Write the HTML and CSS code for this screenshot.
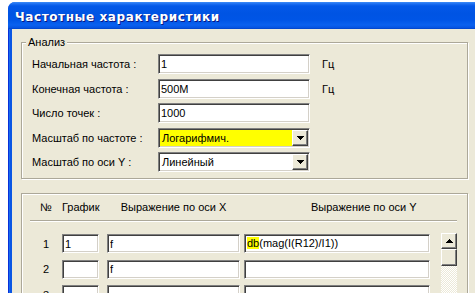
FILE: index.html
```html
<!DOCTYPE html>
<html lang="ru">
<head>
    <meta charset="UTF-8">
    <meta name="viewport" content="width=device-width, initial-scale=1.0">
    <title>Частотные характеристики</title>
    <link rel="stylesheet" href="styles.css">
</head>
<body>

    <div class="window">
        <div class="titlebar">Частотные характеристики</div>
        <div class="client">

            <fieldset class="group">
                <legend>Анализ</legend>
                <div class="form-grid">
                    <label>Начальная частота :</label>
                    <input class="edit" type="text" value="1">
                    <span class="unit">Гц</span>

                    <label>Конечная частота :</label>
                    <input class="edit" type="text" value="500M">
                    <span class="unit">Гц</span>

                    <label>Число точек :</label>
                    <input class="edit" type="text" value="1000">
                    <span></span>

                    <label>Масштаб по частоте :</label>
                    <div class="combo combo-active">
                        <span class="combo-text">Логарифмич.</span>
                        <span class="drop-btn">
                            <svg width="7" height="4" viewBox="0 0 7 4"><polygon points="0,0 7,0 3.5,4" fill="#000"/></svg>
                        </span>
                    </div>
                    <span></span>

                    <label>Масштаб по оси Y :</label>
                    <div class="combo">
                        <span class="combo-text">Линейный</span>
                        <span class="drop-btn">
                            <svg width="7" height="4" viewBox="0 0 7 4"><polygon points="0,0 7,0 3.5,4" fill="#000"/></svg>
                        </span>
                    </div>
                    <span></span>
                </div>
            </fieldset>

            <div class="panel">
                <div class="table-head">
                    <span class="col-num">№</span>
                    <span>График</span>
                    <span class="head-x">Выражение по оси X</span>
                    <span class="head-y">Выражение по оси Y</span>
                </div>
                <div class="separator"></div>

                <div class="table-body">
                    <div class="rows">
                        <span class="col-num">1</span>
                        <input class="edit cell-graph" type="text" value="1">
                        <input class="edit cell-x" type="text" value="f">
                        <div class="edit cell-y"><span class="mark">db</span>(mag(I(R12)/I1))</div>

                        <span class="col-num">2</span>
                        <input class="edit cell-graph" type="text" value="">
                        <input class="edit cell-x" type="text" value="f">
                        <div class="edit cell-y"></div>

                        <span class="col-num">3</span>
                        <input class="edit cell-graph" type="text" value="">
                        <input class="edit cell-x" type="text" value="">
                        <div class="edit cell-y"></div>
                    </div>

                    <div class="scrollbar">
                        <div class="sb-btn">
                            <svg width="7" height="4" viewBox="0 0 7 4"><polygon points="3.5,0 7,4 0,4" fill="#000"/></svg>
                        </div>
                        <div class="sb-thumb"></div>
                        <div class="sb-track"></div>
                    </div>
                </div>
            </div>

        </div>
    </div>

</body>
</html>
```

FILE: styles.css
```css
body {
    margin: 0;
    background: #fff;
    font-family: "Liberation Sans", Arial, sans-serif;
    font-size: 11px;
    color: #000;
    overflow: hidden;
}
.window {
    margin: 2px 0 0 8px;
    width: 480px;
    border-top-left-radius: 7px;
    overflow: hidden;
    background: linear-gradient(to right, #0831d9 0, #0831d9 1px, #166aee 1px, #166aee 2px, #0a56e4 2px);
}
.titlebar {
    height: 27px;
    box-sizing: border-box;
    padding: 3px 0 0 7px;
    line-height: 24px;
    font-family: "DejaVu Sans", Verdana, sans-serif;
    font-size: 12px;
    font-weight: bold;
    letter-spacing: 0.6px;
    color: #fff;
    text-shadow: 1px 1px #0a1883;
    background: linear-gradient(#3d8cf7 0, #1a6cf0 2px, #0358e8 4px, #0054e3 12px, #0055e6 18px, #0a61ef 23px, #0552e0 26px, #003fbf 27px);
}
.client {
    margin-left: 4px;
    height: 270px;
    padding-top: 7px;
    box-sizing: border-box;
    background: #ece9d8;
}

/* group "Анализ" */
.group {
    margin: 0 0 0 9px;
    width: 447px;
    box-sizing: border-box;
    padding: 5px 4px 6px;
    border: 1px solid #aca899;
    box-shadow: inset 1px 1px #fff, 1px 1px #fff;
    min-inline-size: 0;
}
.group legend {
    padding: 0 2px;
    line-height: 13px;
    background: #ece9d8;
}
.form-grid {
    display: grid;
    grid-template-columns: 126px 152px auto;
    grid-auto-rows: 20px;
    row-gap: 4.5px;
    align-items: center;
    padding-left: 6px;
}
.unit {
    padding-left: 12px;
}

/* sunken edit box */
.edit {
    height: 20px;
    margin: 0;
    padding: 0 2px;
    box-sizing: border-box;
    font: inherit;
    color: #000;
    background: #fff;
    border: 1px solid;
    border-color: #808080 #fff #fff #808080;
    box-shadow: inset 1px 1px #404040, inset -1px -1px #d4d0c8;
    border-radius: 0;
    outline: none;
}
.combo {
    display: flex;
    align-items: stretch;
    height: 20px;
    padding: 1px;
    box-sizing: border-box;
    background: #fff;
    border: 1px solid;
    border-color: #808080 #fff #fff #808080;
    box-shadow: inset 1px 1px #404040, inset -1px -1px #d4d0c8;
}
.combo-active {
    background: #ffff00;
}
.combo-text {
    flex: 1;
    padding-left: 2px;
    line-height: 16px;
}
.drop-btn, .sb-btn {
    width: 16px;
    box-sizing: border-box;
    display: flex;
    align-items: center;
    justify-content: center;
    background: #ece9d8;
    border: 1px solid;
    border-color: #fff #404040 #404040 #fff;
    box-shadow: inset -1px -1px #808080;
}
.drop-btn svg, .sb-btn svg {
    shape-rendering: crispEdges;
}

/* lower panel */
.panel {
    margin: 14px 0 0 9px;
    width: 447px;
    height: 120px;
    box-sizing: border-box;
    border: 1px solid #aca899;
    box-shadow: inset 1px 1px #fff, 1px 1px #fff;
}
.table-head {
    display: grid;
    grid-template-columns: 32px 45px 137px 197px;
    padding: 6px 0 0 8px;
    line-height: 14px;
}
.col-num {
    text-align: center;
}
.head-x {
    width: 133px;
    text-align: center;
}
.head-y {
    padding-left: 67px;
    white-space: nowrap;
}
.separator {
    margin: 6px 0 0 8px;
    width: 427px;
    height: 1px;
    background: #aca899;
    border-bottom: 1px solid #fff;
}
.table-body {
    display: flex;
    align-items: flex-start;
    margin: 12px 0 0 8px;
}
.rows {
    display: grid;
    grid-template-columns: 32px 45px 137px 186px;
    grid-auto-rows: 19px;
    row-gap: 6.5px;
    align-items: center;
}
.rows .edit {
    height: 19px;
}
.cell-graph {
    width: 37px;
}
.cell-x {
    width: 133px;
}
.cell-y {
    width: 186px;
    line-height: 17px;
}
.mark {
    background: #ffff00;
}
.scrollbar {
    display: flex;
    flex-direction: column;
    width: 16px;
    margin: -1px 0 0 11px;
}
.sb-btn {
    height: 16px;
}
.sb-thumb {
    height: 17px;
    box-sizing: border-box;
    background: #ece9d8;
    border: 1px solid;
    border-color: #fff #404040 #404040 #fff;
    box-shadow: inset -1px -1px #808080;
}
.sb-track {
    height: 60px;
    background: repeating-conic-gradient(#fff 0 25%, #ece9d8 0 50%) 0 0 / 2px 2px;
}
```
